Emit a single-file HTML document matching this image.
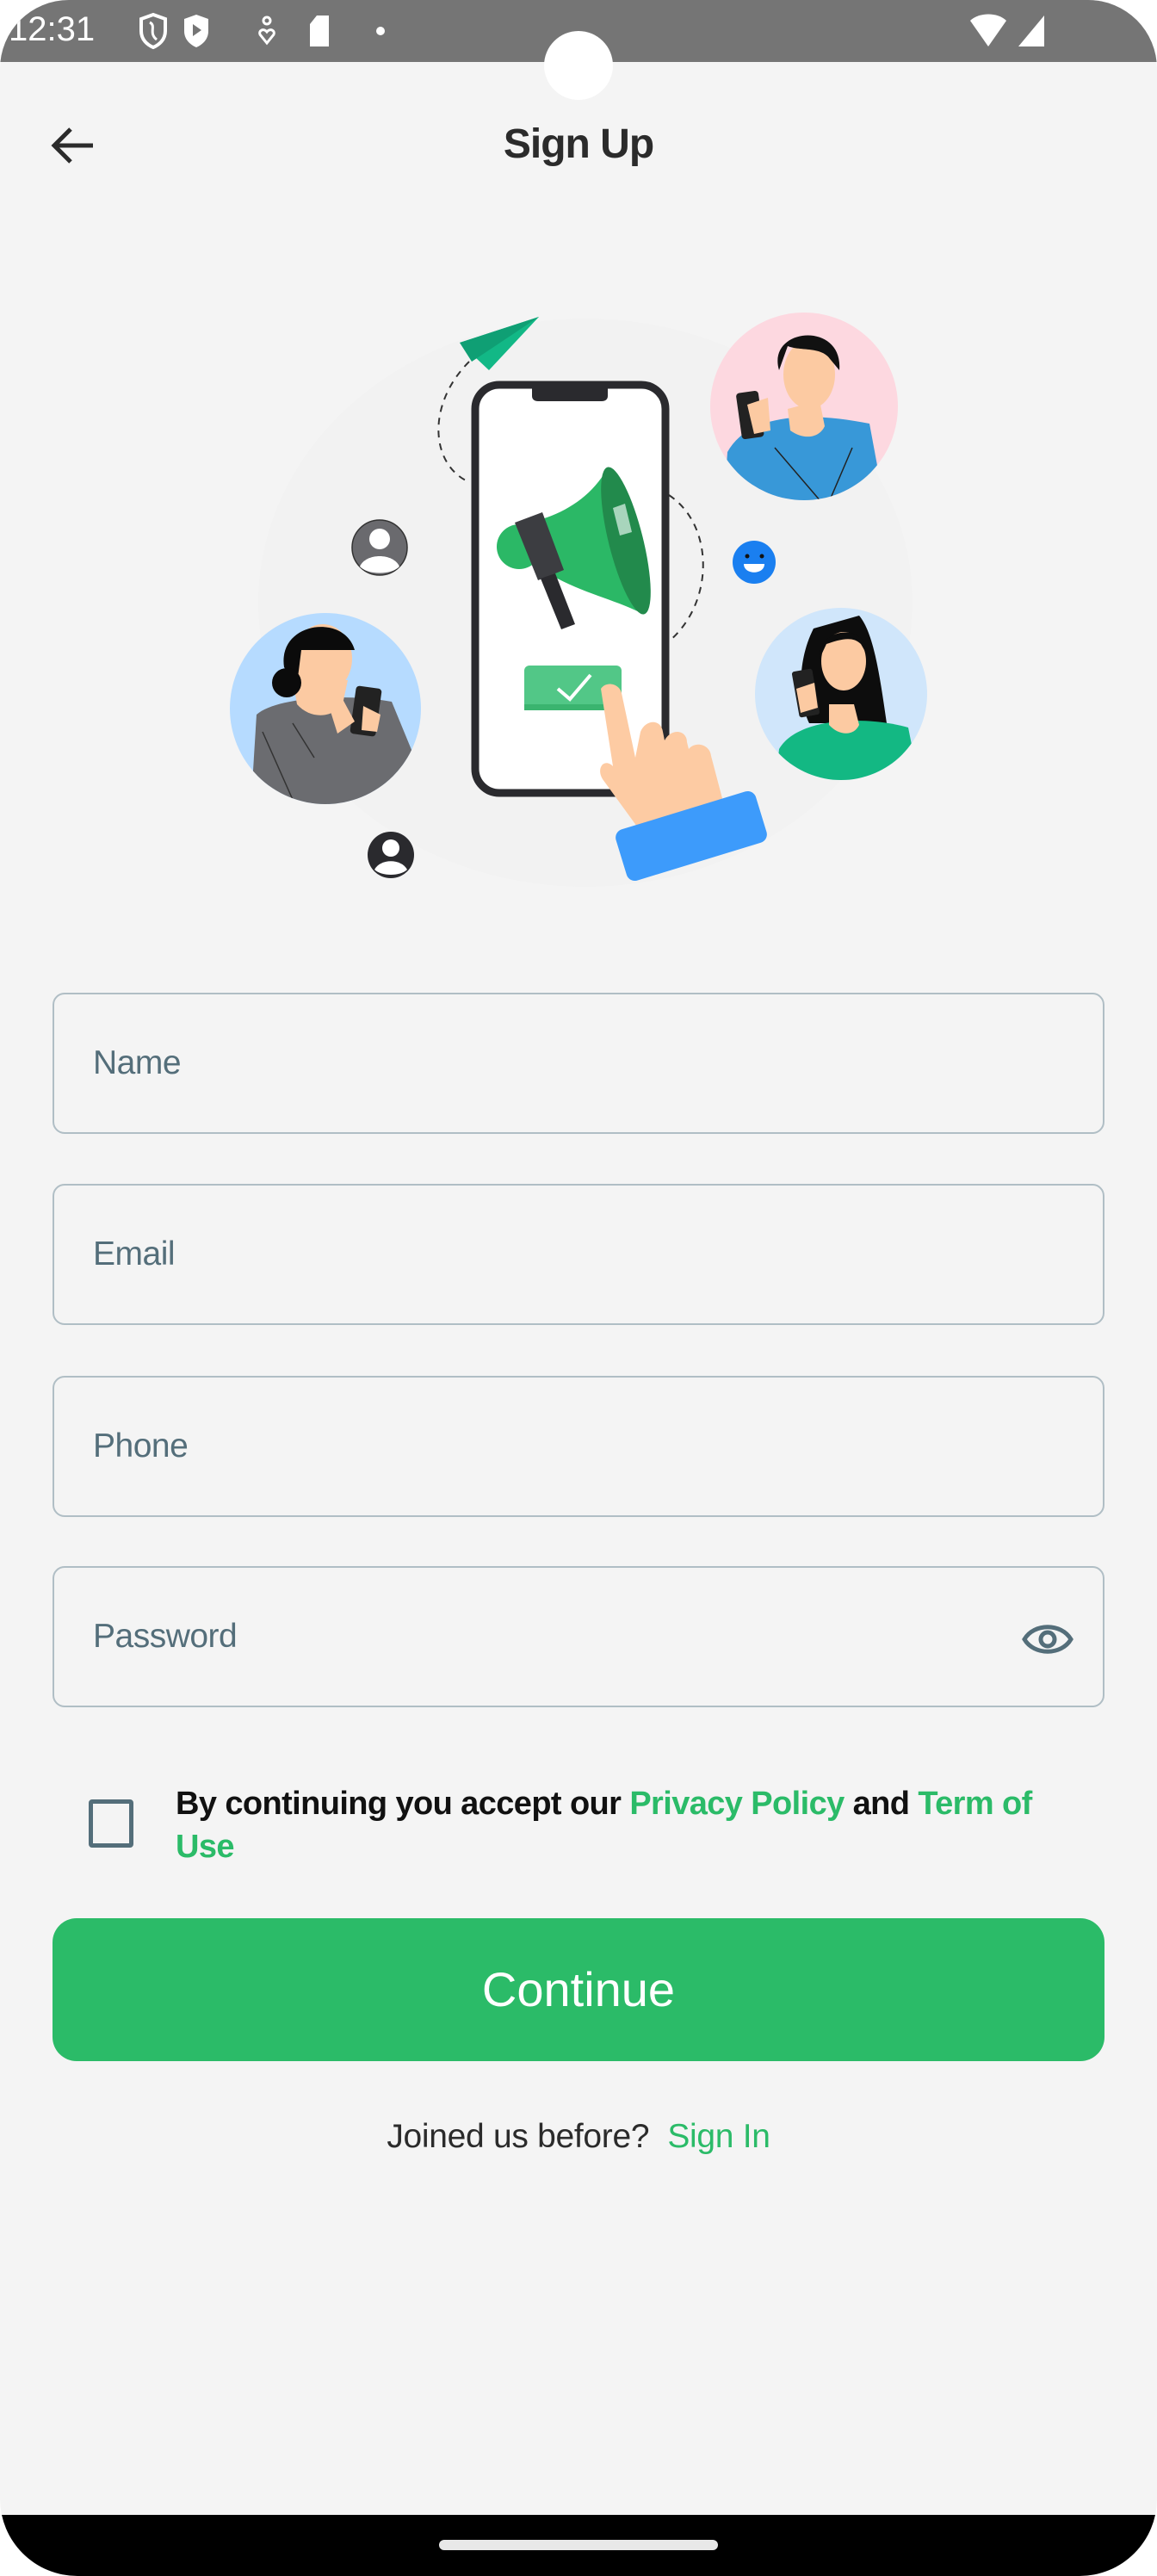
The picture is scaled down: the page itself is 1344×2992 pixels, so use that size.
<!DOCTYPE html>
<html><head><meta charset="utf-8"><style>
html,body{margin:0;padding:0;background:#fff;}
body{width:1344px;height:2992px;position:relative;overflow:hidden;font-family:"Liberation Sans",sans-serif;}
.screen{position:absolute;left:0;top:0;width:1344px;height:2992px;background:#f4f4f4;border-radius:80px 80px 90px 90px;overflow:hidden;}
.status{position:absolute;left:0;top:0;width:1344px;height:72px;background:#757575;color:#fff;}
.cam{position:absolute;left:632px;top:36px;width:80px;height:80px;border-radius:50%;background:#fff;}
.title{position:absolute;left:0;width:1344px;top:140px;text-align:center;font-size:48px;font-weight:bold;color:#2b2b2b;letter-spacing:-1px;}
.field{position:absolute;left:61px;width:1222px;height:164px;border:2.5px solid #b0bec5;border-radius:14px;box-sizing:border-box;}
.field span{position:absolute;left:45px;top:58px;font-size:39px;color:#546e7a;letter-spacing:-0.5px;}
.cb{position:absolute;left:103px;top:2090px;width:52px;height:56px;border:5px solid #546e7a;border-radius:4px;box-sizing:border-box;}
.terms{position:absolute;left:204px;top:2070px;width:1040px;font-size:38px;font-weight:bold;line-height:50px;color:#111;letter-spacing:-0.6px;}
.g{color:#2bbb68;}
.btn{position:absolute;left:61px;top:2228px;width:1222px;height:166px;border-radius:28px;background:#2bbb68;color:#fff;font-size:56px;text-align:center;line-height:166px;}
.join{position:absolute;left:0;width:1344px;top:2460px;text-align:center;font-size:39px;color:#2b2b2b;letter-spacing:-0.3px;}
.nav{position:absolute;left:0;top:2921px;width:1344px;height:71px;background:#000;}
.home{position:absolute;left:510px;top:2950px;width:324px;height:12px;border-radius:6px;background:#e8e8e8;}
</style></head><body>
<div class="screen">
<div class="status">
 <div style="position:absolute;left:10px;top:12px;font-size:40px;">12:31</div>
 <svg style="position:absolute;left:160px;top:14px" width="300" height="44" viewBox="0 0 300 44">
  <path d="M18 3 L32 8 L32 22 C32 32 25 38 18 41 C11 38 4 32 4 22 L4 8 Z" fill="none" stroke="#fff" stroke-width="4"/>
  <path d="M14 12 C22 16 12 24 22 32" fill="none" stroke="#fff" stroke-width="3"/>
  <path d="M68 3 L82 8 L82 22 C82 32 75 38 68 41 C61 38 54 32 54 22 L54 8 Z" fill="#fff"/>
  <path d="M64 14 L74 21 L64 28 Z" fill="#757575"/>
  <circle cx="150" cy="10" r="4" fill="none" stroke="#fff" stroke-width="3"/>
  <path d="M150 36 L142 26 C140 22 146 18 150 23 C154 18 160 22 158 26 Z" fill="none" stroke="#fff" stroke-width="3"/>
  <path d="M208 4 L222 4 L222 40 L200 40 L200 14 Z" fill="#fff"/>
  <circle cx="282" cy="22" r="5" fill="#fff"/>
 </svg>
 <svg style="position:absolute;left:1125px;top:16px" width="90" height="40" viewBox="0 0 90 40"><path d="M2 8 C12 -2 34 -2 44 8 L23 38 Z" fill="#fff"/><path d="M88 2 L88 38 L58 38 Z" fill="#fff"/></svg>
</div>
<div class="cam"></div>
<svg style="position:absolute;left:58px;top:146px" width="54" height="46" viewBox="0 0 54 46"><path d="M50 23 H6 M24 4 L5 23 L24 42" fill="none" stroke="#2b2b2b" stroke-width="5"/></svg>
<div class="title">Sign Up</div>

<svg style="position:absolute;left:0;top:330px" width="1344" height="720" viewBox="0 330 1344 720">
 <defs>
  <clipPath id="c1"><circle cx="378" cy="823" r="111"/></clipPath>
  <clipPath id="c2"><circle cx="934" cy="472" r="109"/></clipPath>
  <clipPath id="c3"><circle cx="977" cy="806" r="100"/></clipPath>
 </defs>
 <ellipse cx="680" cy="700" rx="380" ry="330" fill="#f2f2f2"/>
 <path d="M545 420 C495 470 500 540 545 560" fill="none" stroke="#333" stroke-width="2" stroke-dasharray="8 7"/>
 <path d="M777 575 C830 610 830 700 777 745" fill="none" stroke="#333" stroke-width="2" stroke-dasharray="8 7"/>
 <path d="M534 398 L626 368 L568 430 Z" fill="#12b886"/>
 <path d="M534 398 L626 368 L548 420 Z" fill="#0f9f74"/>
 <!-- left woman -->
 <circle cx="378" cy="823" r="111" fill="#b6dbff"/>
 <g clip-path="url(#c1)">
  <path d="M298 830 C320 810 400 805 455 815 L490 900 L480 960 L290 960 Z" fill="#6b6c70"/>
  <path d="M340 790 L345 818 C360 835 385 835 398 818 L404 790 Z" fill="#fccaa2"/>
  <ellipse cx="375" cy="765" rx="34" ry="40" fill="#fccaa2"/>
  <path d="M330 775 C322 722 400 712 412 755 L350 755 L345 795 Z" fill="#0b0b0b"/>
  <circle cx="333" cy="793" r="17" fill="#0b0b0b"/>
  <rect x="410" y="798" width="30" height="56" rx="4" fill="#222" transform="rotate(8 425 826)"/>
  <path d="M382 820 L398 812 L412 838 L392 852 Z" fill="#fccaa2"/>
  <path d="M422 820 L442 830 L438 850 L420 848 Z" fill="#fccaa2"/>
  <path d="M305 850 L345 940 M340 840 L365 880" stroke="#333" stroke-width="1.5" fill="none"/>
 </g>
 <!-- top right man -->
 <circle cx="934" cy="472" r="109" fill="#fdd8e0"/>
 <g clip-path="url(#c2)">
  <path d="M845 525 C870 480 940 478 1010 492 L1030 600 L840 600 Z" fill="#3898d8"/>
  <path d="M915 475 L918 500 C935 512 952 508 958 495 L952 465 Z" fill="#fccaa2"/>
  <ellipse cx="940" cy="435" rx="30" ry="40" fill="#fccaa2"/>
  <path d="M905 430 C890 380 980 372 975 430 L965 418 C955 402 930 408 915 402 Z" fill="#111"/>
  <rect x="858" y="455" width="26" height="54" rx="4" fill="#222" transform="rotate(-8 871 480)"/>
  <path d="M868 470 L892 462 L895 500 L876 504 Z" fill="#fccaa2"/>
  <path d="M900 520 L960 590 L990 520" stroke="#222" stroke-width="1.5" fill="none"/>
 </g>
 <!-- right woman -->
 <circle cx="977" cy="806" r="100" fill="#d0e6fb"/>
 <g clip-path="url(#c3)">
  <path d="M945 730 C925 770 928 815 940 840 L1030 840 C1022 785 1015 735 998 715 Z" fill="#0d0d0d"/>
  <path d="M905 870 C925 835 1000 830 1055 845 L1070 920 L900 920 Z" fill="#13b883"/>
  <path d="M963 818 L963 842 C975 855 992 855 998 842 L992 818 Z" fill="#fccaa2"/>
  <ellipse cx="980" cy="768" rx="26" ry="34" fill="#fccaa2"/>
  <path d="M952 765 C950 728 1008 722 1008 762 L1000 748 C990 738 975 743 960 748 Z" fill="#0d0d0d"/>
  <rect x="924" y="778" width="24" height="54" rx="3" fill="#222" transform="rotate(-10 936 805)"/>
  <path d="M925 800 L946 793 L950 822 L930 828 Z" fill="#fccaa2"/>
 </g>
 <!-- avatars -->
 <circle cx="441" cy="636" r="32" fill="#6a6a6e" stroke="#333" stroke-width="1.5"/>
 <circle cx="441" cy="626" r="12" fill="#fff"/>
 <path d="M418 658 C425 642 457 642 464 658 C455 668 427 668 418 658 Z" fill="#fff"/>
 <circle cx="454" cy="993" r="27" fill="#2a2a2e"/>
 <circle cx="454" cy="985" r="10" fill="#fff"/>
 <path d="M435 1010 C442 997 466 997 473 1010 C465 1018 443 1018 435 1010 Z" fill="#fff"/>
 <circle cx="876" cy="653" r="25" fill="#1a7ff0"/>
 <circle cx="868" cy="646" r="2.5" fill="#111"/><circle cx="885" cy="646" r="2.5" fill="#111"/>
 <path d="M864 655 H888 C888 668 864 668 864 655 Z" fill="#fff"/>
 <!-- phone -->
 <rect x="552" y="447" width="221" height="474" rx="28" fill="#fff" stroke="#2a2a2e" stroke-width="9"/>
 <path d="M618 449 H706 V460 C706 464 703 466 699 466 H625 C621 466 618 464 618 460 Z" fill="#2a2a2e"/>
 <!-- megaphone -->
 <circle cx="603" cy="635" r="26" fill="#2bb866"/>
 <path d="M610 608 C650 600 685 580 705 545 L745 712 C710 695 680 690 640 668 Z" fill="#2bb866"/>
 <ellipse cx="727" cy="628" rx="20" ry="88" transform="rotate(-14 727 628)" fill="#228a4c"/>
 <path d="M705 560 C712 560 722 590 730 640 L720 650 C712 610 706 580 705 560 Z" fill="#228a4c"/>
 <path d="M712 590 L726 585 L734 618 L720 622 Z" fill="#a8d5bc"/>
 <path d="M598 607 L630 595 L655 662 L625 674 Z" fill="#3c3d41"/>
 <path d="M628 672 L645 666 L668 725 L652 731 Z" fill="#2a2a2e"/>
 <!-- check button -->
 <rect x="609" y="773" width="113" height="52" rx="6" fill="#52c787"/>
 <rect x="609" y="818" width="113" height="7" fill="#3ab46f"/>
 <path d="M648 800 L662 812 L686 784" fill="none" stroke="#fff" stroke-width="4"/>
 <!-- hand -->
 <path d="M698 800 C705 790 720 795 722 805 L738 880 L744 850 C750 835 768 835 770 850 L772 860 C780 845 798 848 798 862 L800 870 C808 860 825 865 826 878 L845 950 L780 990 L740 960 L700 905 C692 892 702 880 712 890 Z" fill="#fdcba3"/>
 <rect x="718" y="940" width="170" height="62" rx="10" fill="#3d9bfb" transform="rotate(-17 803 971)"/>
</svg>

<div class="field" style="top:1153px"><span>Name</span></div>
<div class="field" style="top:1375px"><span>Email</span></div>
<div class="field" style="top:1598px"><span>Phone</span></div>
<div class="field" style="top:1819px"><span>Password</span>
 <svg style="position:absolute;left:1124px;top:60px" width="60" height="46" viewBox="0 0 60 46"><path d="M3 23 C14 4 46 4 57 23 C46 42 14 42 3 23 Z" fill="none" stroke="#546e7a" stroke-width="5"/><circle cx="30" cy="23" r="8" fill="none" stroke="#546e7a" stroke-width="5"/></svg>
</div>
<div class="cb"></div>
<div class="terms">By continuing you accept our <span class="g">Privacy Policy</span> and <span class="g">Term of Use</span></div>
<div class="btn">Continue</div>
<div class="join">Joined us before?&nbsp; <span class="g">Sign In</span></div>
<div class="nav"></div>
<div class="home"></div>
</div>
</body></html>
